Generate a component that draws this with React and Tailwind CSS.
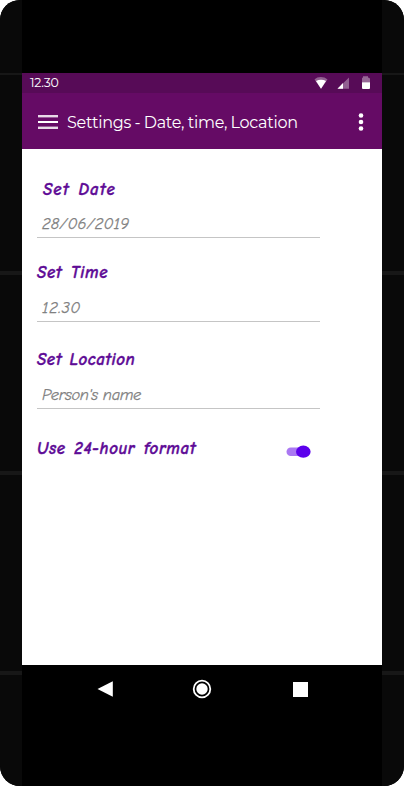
const RAIL = 'w-full bg-[#171717]';

function Rail() {
  return (
    <div className="flex w-[22px] shrink-0 flex-col bg-[#090909]">
      <div className="h-[73px]" />
      <div className={RAIL + ' h-[2px]'} />
      <div className="h-[196px]" />
      <div className={RAIL + ' h-[4px]'} />
      <div className="h-[196px]" />
      <div className={RAIL + ' h-[4px]'} />
      <div className="h-[196px]" />
      <div className={RAIL + ' h-[4px]'} />
    </div>
  );
}

function StatusBar() {
  return (
    <div className="flex h-[20px] items-center justify-between bg-[#570b57] pl-[8px] text-white">
      <span className="text-[12.5px] leading-[20px] tracking-[-0.25px]">12.30</span>
      <svg width="69" height="20" viewBox="0 0 69 20" fill="#fff">
        <path d="M1.5 6.5C4.5 3.2 11 3.2 14.5 6.5L8 15.7Z" opacity=".35" />
        <path d="M3 8C6 6.2 10 6.2 13 8L8 15.7Z" />
        <path d="M36 4.5V15.7H24.5Z" opacity=".35" />
        <path d="M30 10V15.7H24.5Z" />
        <path d="M49 5.5Q49 4.5 50 4.5V3.3H55V4.5Q57 4.5 57 6V9.3H49Z" opacity=".38" />
        <path d="M49 9.3H57V15Q57 15.9 56 15.9H50Q49 15.9 49 15Z" />
      </svg>
    </div>
  );
}

function AppBar() {
  return (
    <header className="flex h-[56px] items-center bg-[#650b65] pl-[16px] pr-[18px] pt-[1px] text-white">
      <svg width="20" height="14" viewBox="0 0 20 14" fill="#fff">
        <rect y="0" width="20" height="2.4" opacity=".85" />
        <rect y="6" width="20" height="2" />
        <rect y="11.6" width="20" height="2.4" opacity=".85" />
      </svg>
      <h1 className="ml-[9px] whitespace-nowrap pt-[2px] text-[16px] leading-[24px] tracking-[-0.27px] [word-spacing:-0.5px]">
        Settings - Date, time, Location
      </h1>
      <svg className="ml-auto" width="6" height="18" viewBox="0 0 6 18" fill="#fff">
        <circle cx="3" cy="2.5" r="2.3" />
        <circle cx="3" cy="9" r="2.3" />
        <circle cx="3" cy="15.5" r="2.3" />
      </svg>
    </header>
  );
}

const COMIC = "font-['Comic_Sans_MS','Comic_Neue','Lato',sans-serif] italic whitespace-nowrap";
const LABEL = COMIC + ' text-[17px] leading-[20px] font-black text-[#5e0b96] [-webkit-text-stroke:0.35px_#5e0b96]';
const VALUE = COMIC + ' pl-[5px] text-[16.5px] leading-[20px] text-[#808080] [-webkit-text-stroke:0.25px_#808080]';

export default function App() {
  return (
    <div className="h-[787px] w-[404px] bg-white font-['Montserrat','Lato',sans-serif]">
      <div className="flex h-[786px] w-[404px] overflow-hidden rounded-[20px] bg-black">
        <Rail />
        <div className="flex w-[360px] flex-col pt-[73px]">
          <StatusBar />
          <AppBar />
          <main className="flex h-[516px] flex-col bg-white pl-[15px] pt-[31px]">
            <section className="h-[83px]">
              <div className={LABEL + ' pl-[6px] tracking-[1px] [word-spacing:2px]'}>Set Date</div>
              <div className="mt-[14px] h-[24px] w-[283px] border-b border-[#c5c5c5]">
                <div className={VALUE + ' tracking-[0.1px]'}>28/06/2019</div>
              </div>
            </section>
            <section className="h-[87px]">
              <div className={LABEL + ' tracking-[0.6px] [word-spacing:2px]'}>Set Time</div>
              <div className="mt-[15px] h-[24px] w-[283px] border-b border-[#c5c5c5]">
                <div className={VALUE + ' tracking-[0.6px]'}>12.30</div>
              </div>
            </section>
            <section className="h-[89px]">
              <div className={LABEL + ' tracking-[0.5px] [word-spacing:1px]'}>Set Location</div>
              <div className="mt-[15px] h-[24px] w-[283px] border-b border-[#c5c5c5]">
                <div className={VALUE + ' tracking-[-0.35px]'}>Person's name</div>
              </div>
            </section>
            <section className="flex h-[26px] w-[274px] items-start justify-between">
              <div className={LABEL + ' tracking-[0.57px] [word-spacing:2px]'}>Use 24-hour format</div>
              <svg className="mt-[6px]" width="25" height="14" viewBox="0 0 25 14">
                <rect x="0.5" y="2.5" width="18" height="8.5" rx="4.25" fill="#aa78f2" />
                <ellipse cx="17.3" cy="6.7" rx="7.3" ry="6.1" fill="#5c00ec" />
              </svg>
            </section>
          </main>
          <nav className="flex h-[48px] items-center justify-between pl-[75px] pr-[74px]">
            <svg width="16" height="16" viewBox="0 0 16 16" fill="#fff">
              <path d="M15.8 .3V15.7L.5 8Z" />
            </svg>
            <svg className="mr-[2px]" width="20" height="20" viewBox="0 0 20 20">
              <circle cx="10" cy="10" r="8.3" fill="none" stroke="#fff" strokeWidth="1.8" />
              <circle cx="10" cy="10" r="5.7" fill="#fff" />
            </svg>
            <div className="h-[15px] w-[15px] bg-white" />
          </nav>
        </div>
        <Rail />
      </div>
    </div>
  );
}
